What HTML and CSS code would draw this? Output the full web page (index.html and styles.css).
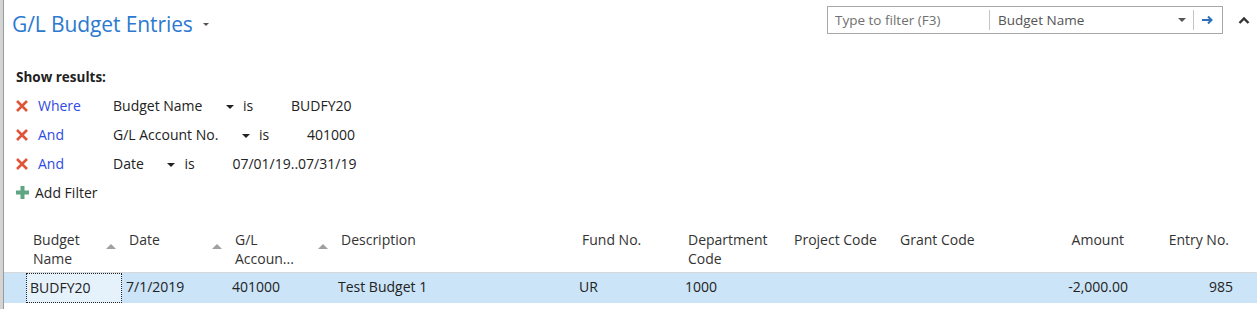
FILE: index.html
```html
<!DOCTYPE html>
<html lang="en">
<head>
    <meta charset="UTF-8">
    <title>G/L Budget Entries</title>
    <link rel="stylesheet" href="styles.css">
</head>
<body>
    <div class="page">
        <header class="topbar">
            <h1 class="title">G/L Budget Entries <span class="caret small"></span></h1>
            <div class="search-area">
                <div class="search">
                    <span class="search-input">Type to filter (F3)</span>
                    <span class="search-field">Budget Name <span class="caret dark"></span></span>
                    <span class="search-go">
                        <svg width="12" height="10" viewBox="0 0 12 10"><path d="M0 5h9M6 1.5l3.5 3.5L6 8.5" fill="none" stroke="#2f6fb7" stroke-width="2"/></svg>
                    </span>
                </div>
                <svg class="collapse" width="12" height="8" viewBox="0 0 12 8"><path d="M1.5 7L6 2.5 10.5 7" fill="none" stroke="#333" stroke-width="2.4"/></svg>
            </div>
        </header>

        <section class="filters">
            <div class="show-results">Show results:</div>
            <div class="filter-row">
                <svg class="remove" width="12" height="12" viewBox="0 0 12 12"><path d="M1 1l10 10M11 1L1 11" stroke="#e0553a" stroke-width="2.6"/></svg>
                <span class="joiner">Where</span>
                <span class="field">Budget Name <span class="caret dark"></span></span>
                <span class="op">is</span>
                <span class="value">BUDFY20</span>
            </div>
            <div class="filter-row">
                <svg class="remove" width="12" height="12" viewBox="0 0 12 12"><path d="M1 1l10 10M11 1L1 11" stroke="#e0553a" stroke-width="2.6"/></svg>
                <span class="joiner">And</span>
                <span class="field">G/L Account No. <span class="caret dark"></span></span>
                <span class="op">is</span>
                <span class="value">401000</span>
            </div>
            <div class="filter-row">
                <svg class="remove" width="12" height="12" viewBox="0 0 12 12"><path d="M1 1l10 10M11 1L1 11" stroke="#e0553a" stroke-width="2.6"/></svg>
                <span class="joiner">And</span>
                <span class="field">Date <span class="caret dark"></span></span>
                <span class="op">is</span>
                <span class="value">07/01/19..07/31/19</span>
            </div>
            <div class="add-filter">
                <svg width="13" height="13" viewBox="0 0 13 13"><path d="M6.5 0v13M0 6.5h13" stroke="#5fa583" stroke-width="4"/></svg>
                Add Filter
            </div>
        </section>

        <div class="grid">
            <div class="grid-head">
                <div class="th sort">Budget<br>Name<span class="sort-arrow"></span></div>
                <div class="th sort">Date<span class="sort-arrow"></span></div>
                <div class="th sort">G/L<br>Accoun...<span class="sort-arrow"></span></div>
                <div class="th">Description</div>
                <div class="th">Fund No.</div>
                <div class="th">Department<br>Code</div>
                <div class="th">Project Code</div>
                <div class="th">Grant Code</div>
                <div class="th num">Amount</div>
                <div class="th num">Entry No.</div>
            </div>
            <div class="grid-row selected">
                <div class="td focus">BUDFY20</div>
                <div class="td">7/1/2019</div>
                <div class="td">401000</div>
                <div class="td">Test Budget 1</div>
                <div class="td">UR</div>
                <div class="td">1000</div>
                <div class="td"></div>
                <div class="td"></div>
                <div class="td num">-2,000.00</div>
                <div class="td num">985</div>
            </div>
        </div>
    </div>
</body>
</html>
```

FILE: styles.css
```css
body {
    margin: 0;
    font-family: 'Open Sans', 'Noto Sans', sans-serif;
    font-size: 14px;
    color: #222;
    background-color: #fff;
    border-left: 3px solid #d4d4d4;
    height: 309px;
    overflow: hidden;
}
.page {
    border-left: 1px solid #9a9a9a;
    height: 309px;
}
.topbar {
    display: flex;
    justify-content: space-between;
    align-items: flex-start;
    height: 67px;
}
.title {
    margin: 10px 0 0 8px;
    font-size: 21px;
    font-weight: normal;
    color: #2b79d0;
    letter-spacing: -0.1px;
}
.caret {
    display: inline-block;
    width: 0;
    height: 0;
    border-left: 4px solid transparent;
    border-right: 4px solid transparent;
    border-top: 4px solid #222;
    vertical-align: middle;
}
.caret.small {
    border-left-width: 3px;
    border-right-width: 3px;
    border-top: 3px solid #555;
    margin-left: 5px;
    position: relative;
    top: -2px;
}
.caret.dark {
    border-top-color: #222;
}
.search-area {
    display: flex;
    align-items: center;
    margin-top: 6px;
}
.search {
    display: flex;
    align-items: center;
    width: 394px;
    height: 26px;
    border: 1px solid #a8a8a8;
    color: #666;
}
.search-input {
    width: 154px;
    padding-left: 7px;
    border-right: 1px solid #c4c4c4;
    line-height: 20px;
    font-size: 13.5px;
    color: #707070;
}
.search-field {
    flex: 1;
    display: flex;
    justify-content: space-between;
    align-items: center;
    padding: 0 7px 0 8px;
    font-size: 13.5px;
    color: #555;
    border-right: 1px solid #c4c4c4;
    line-height: 20px;
}
.search-field .caret {
    border-top-color: #555;
}
.search-go {
    width: 28px;
    display: flex;
    justify-content: center;
}
.collapse {
    margin: 0 7px 0 15px;
}
.filters {
    padding-left: 12px;
}
.show-results {
    font-weight: bold;
    font-size: 13.5px;
    line-height: 20px;
    margin-bottom: 4px;
}
.filter-row {
    display: flex;
    align-items: center;
    height: 29px;
}
.remove {
    margin-right: 10px;
}
.joiner {
    width: 75px;
    color: #3049e4;
}
.field .caret {
    margin-left: 20px;
}
.op {
    margin-left: 9px;
    width: 48px;
}
.add-filter {
    display: flex;
    align-items: center;
    gap: 6px;
    height: 28px;
}
.grid {
    margin-top: 24px;
}
.grid-head,
.grid-row {
    display: grid;
    grid-template-columns: 22px 96px 106px 106px 241px 106px 106px 106px 106px 133px 105px;
}
.grid-head::before,
.grid-row::before {
    content: "";
}
.grid-head {
    height: 42px;
    border-bottom: 1px solid #d8d8d8;
    color: #333;
}
.th {
    position: relative;
    padding: 0 10px 0 7px;
    line-height: 19px;
}
.th.num {
    text-align: right;
    padding-right: 8px;
}
.sort-arrow {
    position: absolute;
    right: 6px;
    top: 14px;
    border-left: 5px solid transparent;
    border-right: 5px solid transparent;
    border-bottom: 5px solid #a0a0a0;
}
.grid-row {
    height: 30px;
    line-height: 28px;
}
.grid-row.selected {
    background-color: #cce4f7;
}
.td {
    padding-left: 4px;
    white-space: nowrap;
}
.td.num {
    text-align: right;
    padding-right: 4px;
}
.td.focus {
    background-color: #e5f1fb;
    border: 1px dotted #222;
    padding-left: 3px;
}
```
